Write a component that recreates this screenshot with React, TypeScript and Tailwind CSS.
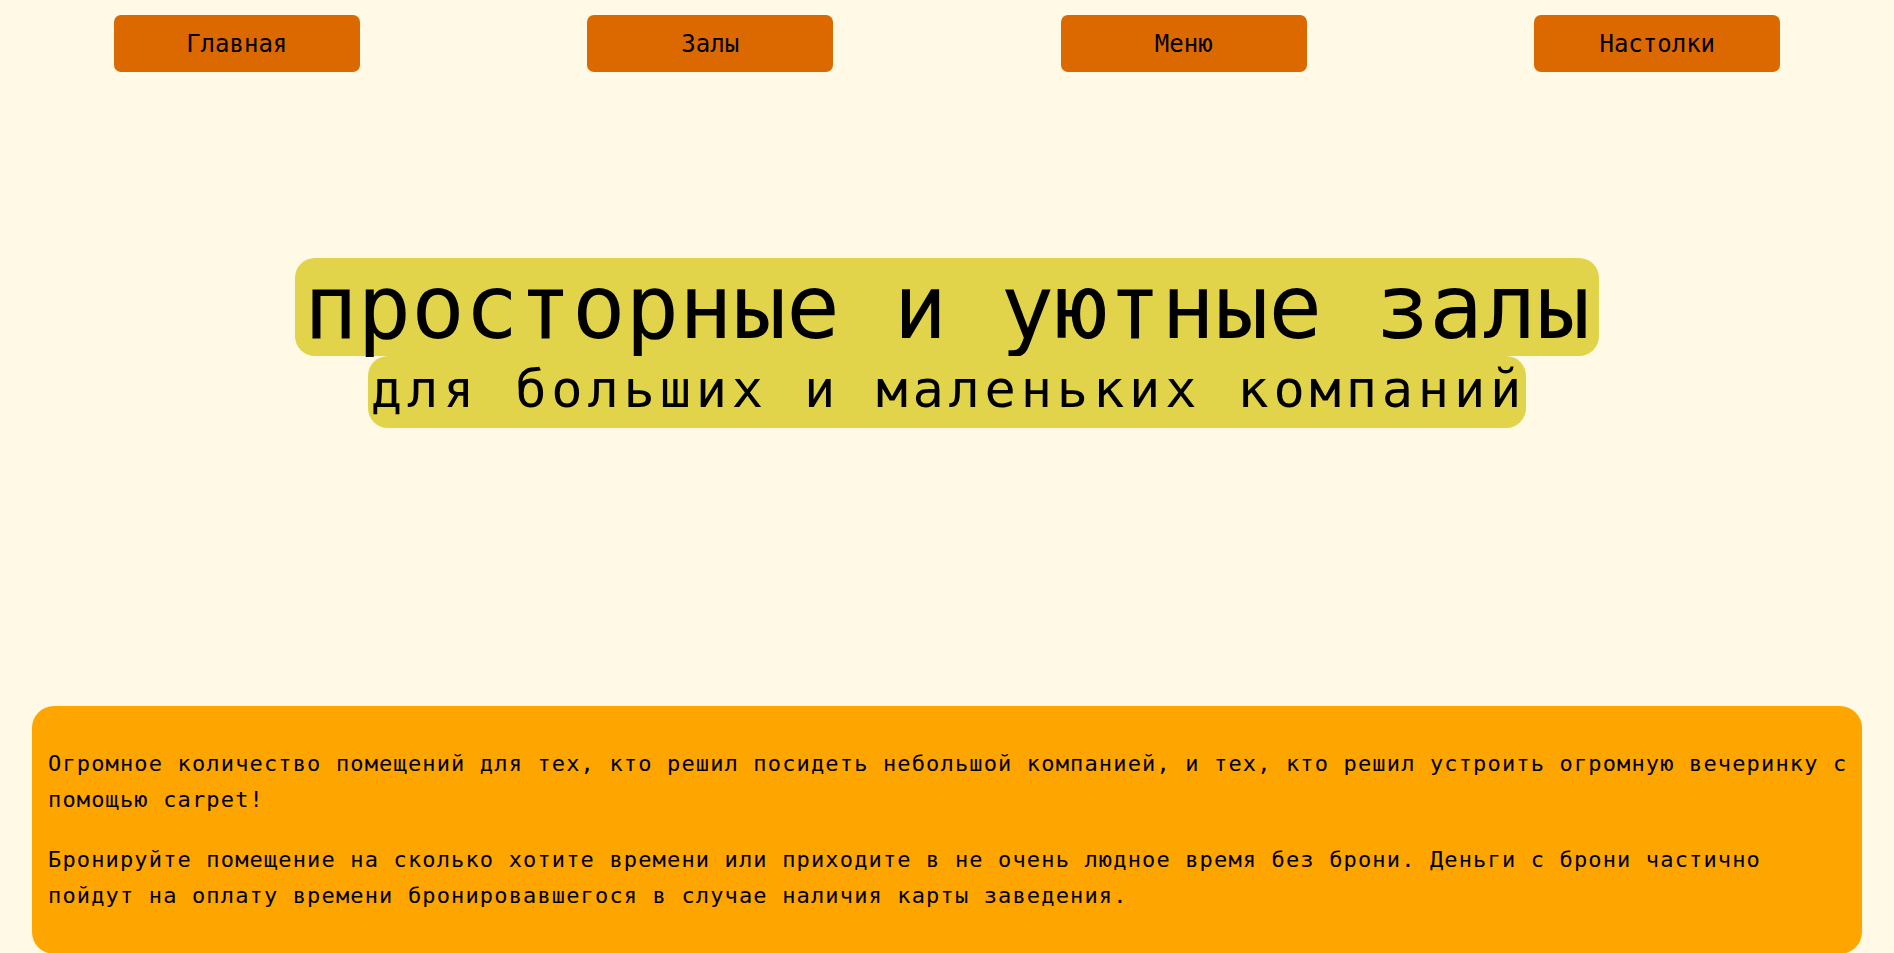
const navItems = ["Главная", "Залы", "Меню", "Настолки"];

export default function App() {
  return (
    <div className="min-h-screen bg-[#fff9e6] text-black font-['DejaVu_Sans_Mono',monospace] overflow-hidden">
      {/* top nav: four equal columns, buttons centred */}
      <nav className="grid grid-cols-4 pt-[15px]">
        {navItems.map((item) => (
          <div key={item} className="flex justify-center">
            <button className="w-[246px] h-[57px] rounded-[7px] bg-[#dc6900] text-[24px] leading-none">
              {item}
            </button>
          </div>
        ))}
      </nav>

      {/* hero */}
      <section className="mt-[186px] flex flex-col items-center">
        <h1 className="rounded-[20px] bg-[#e2d44a] px-[9px] text-[89px] leading-[98px] font-normal">
          просторные и уютные залы
        </h1>
        <h2 className="rounded-[20px] bg-[#e2d44a] pl-[3px] pr-0 pb-[6px] text-[52px] leading-[66px] tracking-[4.8px] font-normal">
          для больших и маленьких компаний
        </h2>
      </section>

      {/* description card */}
      <section className="mt-[278px] mx-8 rounded-[22px] bg-[#ffa500] pl-4 pr-3 py-4 text-[22px] leading-[36px] tracking-[1.15px]">
        <p className="my-6">
          Огромное количество помещений для тех, кто решил посидеть небольшой компанией, и тех, кто решил устроить огромную вечеринку с помощью carpet!
        </p>
        <p className="my-6">
          Бронируйте помещение на сколько хотите времени или приходите в не очень людное время без брони. Деньги с брони частично пойдут на оплату времени бронировавшегося в случае наличия карты заведения.
        </p>
      </section>
    </div>
  );
}
